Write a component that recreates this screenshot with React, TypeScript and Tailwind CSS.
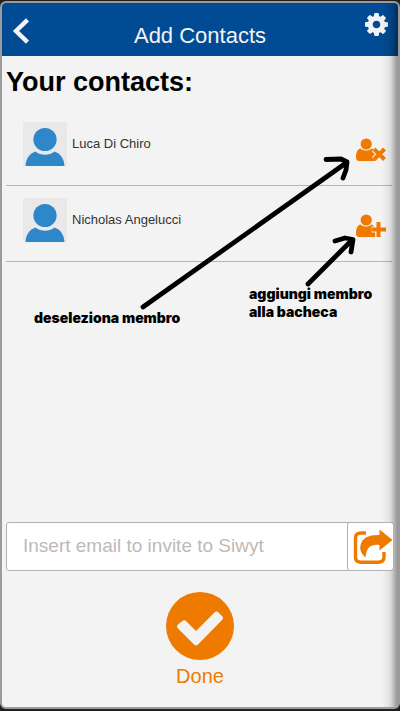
import React from "react";

type Action = "remove" | "add";

const contacts: { name: string; action: Action }[] = [
  { name: "Luca Di Chiro", action: "remove" },
  { name: "Nicholas Angelucci", action: "add" },
];

function GearIcon() {
  return (
    <svg viewBox="128 128 1536 1536" className="size-[23px]" fill="currentColor" aria-hidden="true">
      <path d="M1152 896q0-106-75-181t-181-75-181 75-75 181 75 181 181 75 181-75 75-181zm512-109v222q0 12-8 23t-20 13l-185 28q-19 54-39 91 35 50 107 138 10 12 10 25t-9 23q-27 37-99 108t-94 71q-12 0-26-9l-138-108q-44 23-91 38-16 136-29 186-7 28-36 28h-222q-14 0-24.5-8.5t-11.5-21.5l-28-184q-49-16-90-37l-141 107q-10 9-25 9-14 0-25-11-126-114-165-168-7-10-7-23 0-12 8-23 15-21 51-66.5t54-70.5q-27-50-41-99l-183-27q-13-2-21-12.5t-8-23.5v-222q0-12 8-23t19-13l186-28q14-46 39-92-40-57-107-138-10-12-10-24 0-10 9-23 26-36 98.5-107.5t94.5-71.5q13 0 26 10l138 107q44-23 91-38 16-136 29-186 7-28 36-28h222q14 0 24.5 8.5t11.5 21.5l28 184q49 16 90 37l142-107q9-9 24-9 13 0 25 10 129 119 165 170 7 8 7 22 0 12-8 23-15 21-51 66.5t-54 70.5q26 50 41 98l183 28q13 2 21 12.5t8 23.5z" />
    </svg>
  );
}

function Avatar() {
  return (
    <svg viewBox="0 0 44 44" className="size-11 shrink-0" aria-hidden="true">
      <rect width="44" height="44" fill="#e9e9e9" />
      <path d="M2.500 44C3 36.500 6.500 31.500 12.500 29.500C18 33.800 26 33.800 31.500 29.500C37.500 31.500 41 36.500 41.500 44Z" fill="#2e87c8" />
      <circle cx="22" cy="17.500" r="11.600" fill="#2e87c8" />
    </svg>
  );
}

function MemberIcon({ action }: { action: Action }) {
  const mark = action === "remove" ? "M18 11L28.500 21.500M28.500 11L18 21.500" : "M22.500 8V23M15.500 15.500H30";
  return (
    <svg viewBox="0 0 30 24" className="h-6 w-[30px]" fill="none" aria-hidden="true">
      <path d="M4.500 10.500C6 12 7.800 12.600 10 12.600S14 12 15.500 10.500C17.500 10.900 19 13 19.500 16V23H3C1 23 0 21.800 0 19.500C0 14.500 1.500 11 4.500 10.500Z" fill="currentColor" />
      <circle cx="10.200" cy="6" r="5.600" fill="currentColor" />
      <path d={mark} stroke="#f3f3f3" strokeWidth="6.200" />
      <path d={mark} stroke="currentColor" strokeWidth="4" />
    </svg>
  );
}

function ShareIcon() {
  return (
    <svg viewBox="0 0 40 36" className="h-9 w-10 shrink-0" fill="none" aria-hidden="true">
      <path d="M13 4H8C4 4 2.500 6 2.500 9V28C2.500 31.500 4.500 33.300 8 33.300H25C29 33.300 31 31.500 31 28V23" stroke="currentColor" strokeWidth="3.400" />
      <path d="M26.500 0.500L39.500 11L26.500 21.500V16C18.500 15 13.500 17.500 12.500 28.500C8.500 25 6.500 21 7.500 16.500C9 9 15 5.800 26.500 6Z" fill="currentColor" />
    </svg>
  );
}

function Notes() {
  return (
    <div className="pointer-events-none absolute top-0 right-0 h-[330px] w-[400px] font-['Inter',sans-serif] text-sm leading-[18px] font-black text-black">
      <svg viewBox="0 0 400 330" className="absolute inset-0 size-full" fill="none" stroke="currentColor" strokeWidth="4.800" strokeLinecap="round" strokeLinejoin="round" aria-hidden="true">
        <path d="M143 307L346 163M326 159.500L341 159L347 162L346 170L343 178" />
        <path d="M308 284L352 240M335 241L345 238L353 239.500L351 252" />
      </svg>
      <p className="absolute top-[309px] left-[34px] whitespace-nowrap">deseleziona membro</p>
      <p className="absolute top-[285px] left-[249px] whitespace-nowrap">
        aggiungi membro
        <br />
        alla bacheca
      </p>
    </div>
  );
}

export default function App() {
  return (
    <div className="relative flex min-h-screen bg-[#231f20] pt-px pb-0.5 font-['Liberation_Sans',Arial,sans-serif]">
      <div className="relative flex flex-1 flex-col overflow-hidden rounded-md border-2 border-[#9c9a9a] bg-[#f3f3f3]">
        <header className="flex h-[53px] justify-between bg-[#004b93] text-[#f3f3f3]">
          <button type="button" aria-label="Back" className="w-10 pt-0.5 pl-2.5">
            <svg viewBox="0 0 18 26" className="h-[26px] w-[18px]" fill="none" stroke="currentColor" strokeWidth="4.400" aria-hidden="true">
              <path d="M15.500 1.800L4 13L15.500 24.200" />
            </svg>
          </button>
          <h1 className="self-end pb-1.5 text-[22px] leading-7">Add Contacts</h1>
          <button type="button" aria-label="Settings" className="flex w-10 items-start justify-end pt-2.5 pr-2.5">
            <GearIcon />
          </button>
        </header>

        <main className="flex flex-1 flex-col px-1">
          <h2 className="h-[54px] pt-2.5 text-[27px] leading-8 font-bold text-black">Your contacts:</h2>
          <ul className="pr-0.5">
            {contacts.map((c) => (
              <li key={c.name} className="flex h-[76px] items-start border-b border-[#b5b5b5] pt-3 pl-[17px] pr-1.5">
                <Avatar />
                <span className="ml-[5px] flex-1 pt-3 text-[13px] leading-5 text-[#333]">{c.name}</span>
                <button type="button" aria-label={c.action === "remove" ? "Deselect member" : "Add member"} className="pt-4 text-[#ee7a00]">
                  <MemberIcon action={c.action} />
                </button>
              </li>
            ))}
          </ul>
        </main>

        <div className="pointer-events-none absolute inset-y-0 right-0 w-4 bg-linear-to-r from-transparent via-black/8 to-black/40" />

        <form className="relative ml-1 mr-1 flex h-[49px] rounded-[3px] border border-[#b5b1b1] bg-white" onSubmit={(e) => e.preventDefault()}>
          <input
            type="email"
            aria-label="Insert email to invite to Siwyt"
            placeholder="Insert email to invite to Siwyt"
            className="min-w-0 flex-1 pl-4 text-[19px] text-[#333] outline-none placeholder:text-[#bfb9b6]"
          />
          <button type="submit" aria-label="Send invite" className="-my-px -mr-px flex w-[47px] items-center justify-center rounded-[3px] border border-[#b5b1b1] pl-1 text-[#ee7a00]">
            <ShareIcon />
          </button>
        </form>

        <button type="button" className="mt-[21px] mb-[17px] flex flex-col items-center self-center text-xl leading-7 text-[#ee7a00]">
          <svg viewBox="0 0 68 68" className="mb-0.5 size-[68px]" aria-hidden="true">
            <circle cx="34" cy="34" r="34" fill="currentColor" />
            <path d="M16.500 29Q18.500 27.500 20.500 29.500L30 39L48.500 20.500Q50.500 18.500 52.500 20.500L56 24Q58 26 56 28L32 52.500Q30 54.500 28 52.500L12 36.500Q10 34.500 12 32.500Z" fill="#f3f3f3" />
          </svg>
          Done
        </button>
      </div>
      <Notes />
    </div>
  );
}
